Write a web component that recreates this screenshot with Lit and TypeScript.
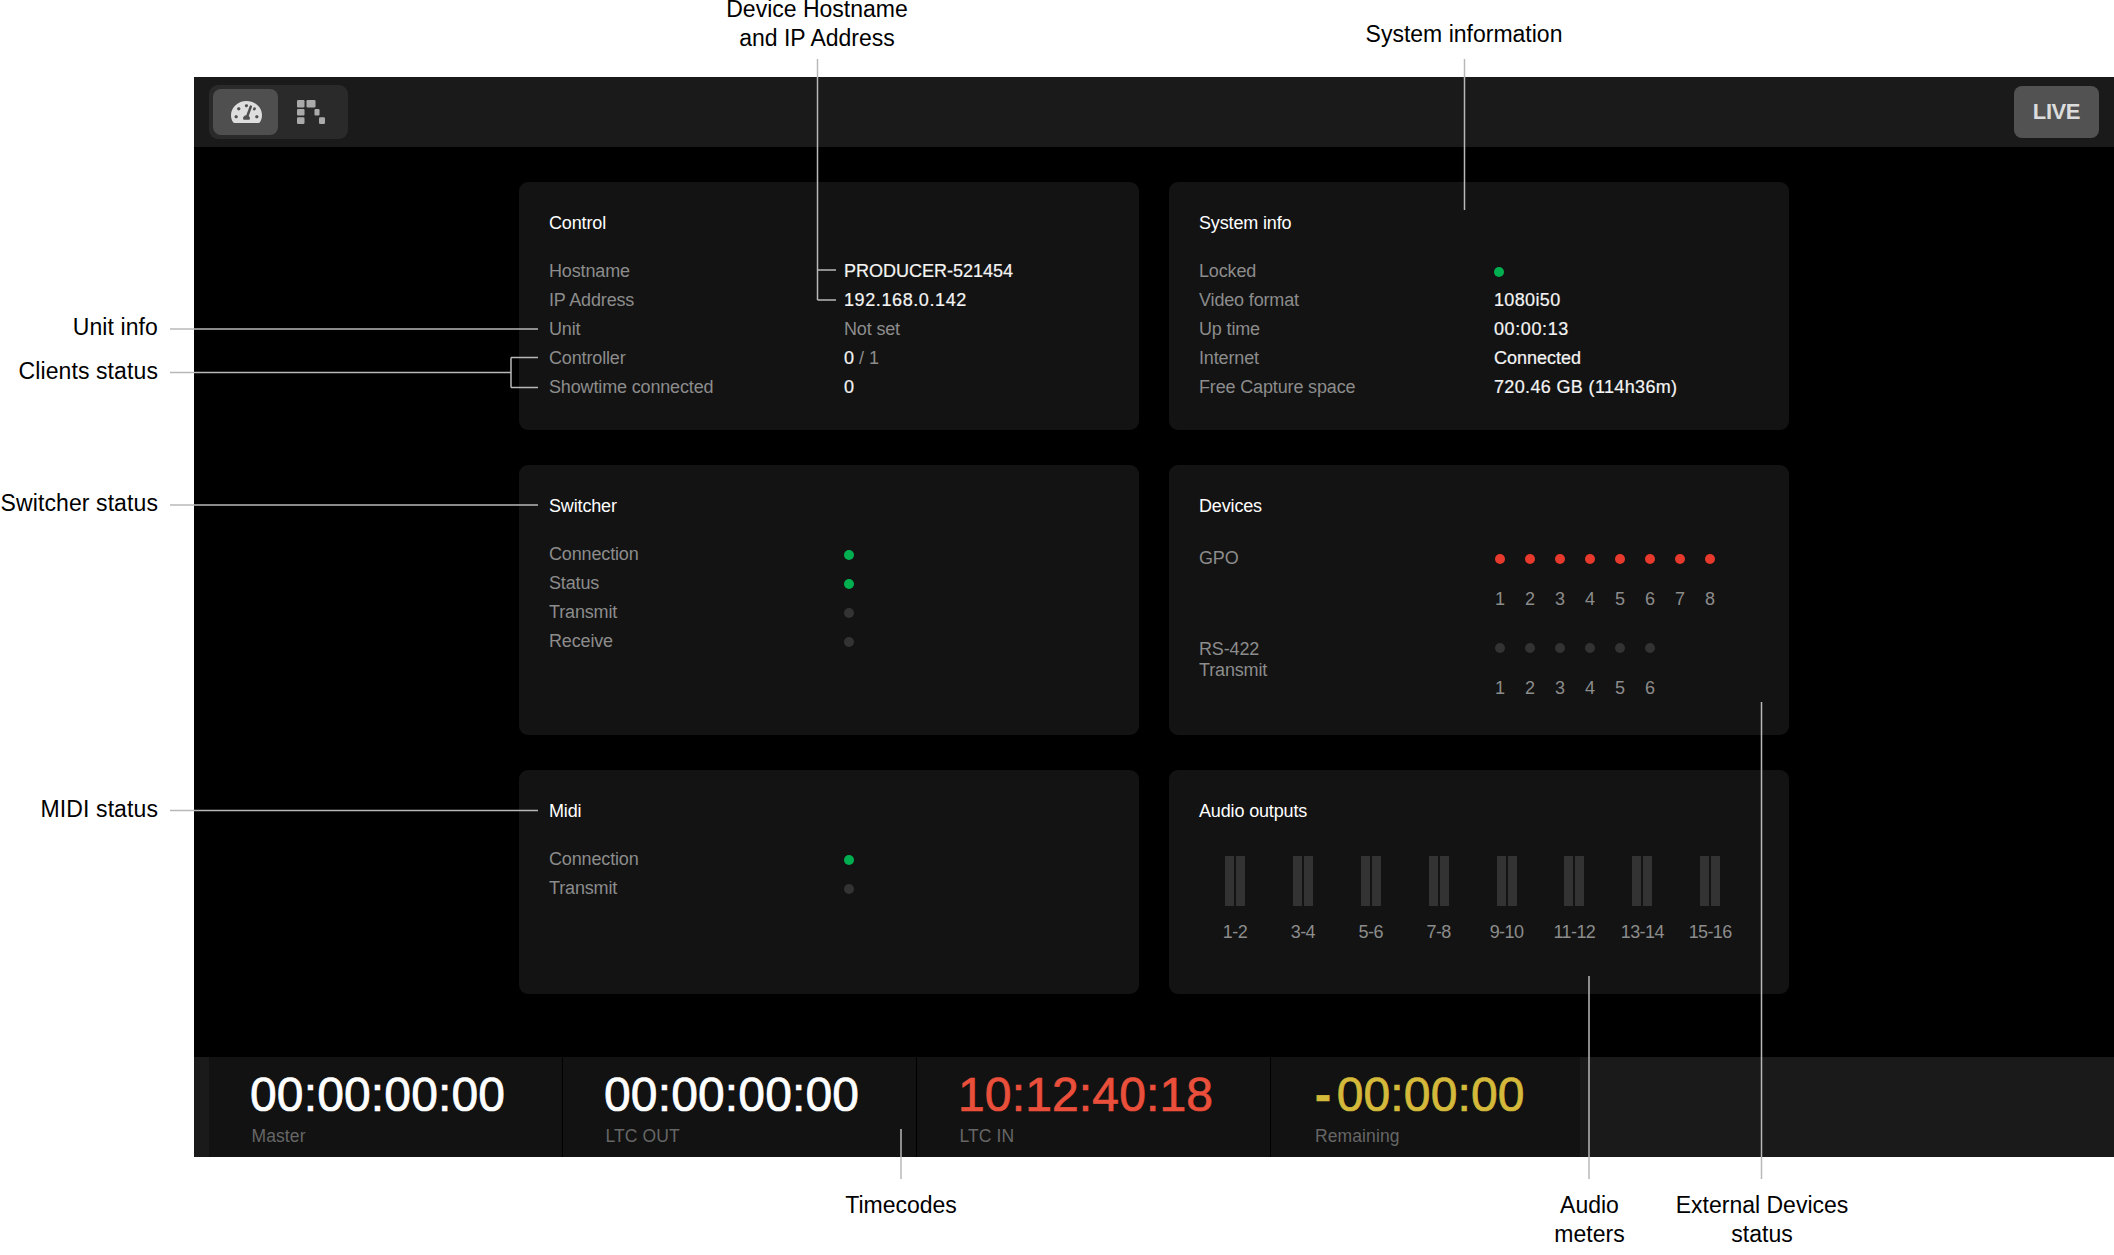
import { LitElement, css, html, svg } from "lit";
import { customElement } from "lit/decorators.js";

const GAUGE =
  "M288 32C128.94 32 0 160.94 0 320c0 52.8 14.25 102.26 39.06 144.8 5.61 9.62 16.3 15.2 27.44 15.2h443c11.14 0 21.83-5.58 27.44-15.2C561.75 422.26 576 372.8 576 320c0-159.06-128.94-288-288-288zm0 64c14.71 0 26.58 10.13 30.32 23.65-1.11 2.26-2.64 4.23-3.45 6.67l-9.22 27.67c-5.13 3.49-10.97 6.01-17.64 6.01-17.67 0-32-14.33-32-32S270.33 96 288 96zM96 384c-17.67 0-32-14.33-32-32s14.33-32 32-32 32 14.33 32 32-14.33 32-32 32zm48-160c-17.67 0-32-14.33-32-32s14.33-32 32-32 32 14.33 32 32-14.33 32-32 32zm246.77-72.41l-61.33 184C343.13 347.33 352 364.54 352 384c0 11.72-3.38 22.55-8.88 32H232.88c-5.5-9.45-8.88-20.28-8.88-32 0-33.94 26.5-61.43 59.9-63.59l61.34-184.01c4.17-12.56 17.73-19.45 30.36-15.17 12.57 4.19 19.35 17.77 15.17 30.36zm14.66 57.2l15.52-46.55c3.47-1.29 7.13-2.23 11.05-2.23 17.67 0 32 14.33 32 32s-14.33 32-32 32c-11.38-.01-20.89-6.28-26.57-15.22zM480 384c-17.67 0-32-14.33-32-32s14.33-32 32-32 32 14.33 32 32-14.33 32-32 32z";

// x, y, width, height of each block in the second tab icon
const BLOCKS = [
  [0, 0, 7.5, 7.5],
  [9.5, 0, 9, 7.5],
  [0, 9, 7.5, 6.5],
  [17.5, 9, 5, 6.5],
  [0, 17.2, 7.5, 6.8],
  [22, 17.2, 6, 6.8],
];

// callout leader lines: x1, y1, x2, y2
const LEADERS = [
  [817.5, 59, 817.5, 300],
  [817.5, 270, 836, 270],
  [817.5, 300, 836, 300],
  [1464.5, 59, 1464.5, 210],
  [170, 329, 538, 329],
  [170, 372.5, 511, 372.5],
  [511, 357.5, 511, 387.5],
  [511, 357.5, 538, 357.5],
  [511, 387.5, 538, 387.5],
  [170, 505, 538, 505],
  [170, 810.5, 538, 810.5],
  [901, 1129, 901, 1179],
  [1589, 976, 1589, 1179],
  [1761.5, 702, 1761.5, 1179],
];

// callout labels: anchor x, top y, alignment, lines
const NOTES: [number, number, string, string[]][] = [
  [817, -5, "center", ["Device Hostname", "and IP Address"]],
  [1464, 20, "center", ["System information"]],
  [158, 313, "end", ["Unit info"]],
  [158, 356.5, "end", ["Clients status"]],
  [158, 488.5, "end", ["Switcher status"]],
  [158, 794.5, "end", ["MIDI status"]],
  [901, 1190.5, "center", ["Timecodes"]],
  [1589.5, 1190.5, "center", ["Audio", "meters"]],
  [1762, 1190.5, "center", ["External Devices", "status"]],
];

const TIMECODES = [
  { label: "Master", value: "00:00:00:00", tone: "" },
  { label: "LTC OUT", value: "00:00:00:00", tone: "" },
  { label: "LTC IN", value: "10:12:40:18", tone: "tc-red" },
];

const METERS = ["1-2", "3-4", "5-6", "7-8", "9-10", "11-12", "13-14", "15-16"];

@customElement("app-root")
export class AppRoot extends LitElement {
  private dot(tone: string) {
    return html`<span class="dot ${tone}"></span>`;
  }

  private dotRow(count: number, tone: string) {
    const items = Array.from({ length: count }, (_, i) => i + 1);
    return html`
      <div class="ports">
        ${items.map((n) => html`<div class="port">${this.dot(tone)}<span class="num">${n}</span></div>`)}
      </div>
    `;
  }

  private renderHeader() {
    return html`
      <header class="topbar">
        <div class="tabs">
          <div class="tab active">
            <svg width="31" height="22" viewBox="0 32 576 448" preserveAspectRatio="none">
              <path d=${GAUGE} fill="#dedede"></path>
            </svg>
          </div>
          <div class="tab">
            <svg width="28" height="24" viewBox="0 0 28 24">
              ${BLOCKS.map(([x, y, w, h]) => svg`<rect x=${x} y=${y} width=${w} height=${h} rx="1.2" fill="#aaa"></rect>`)}
            </svg>
          </div>
        </div>
        <div class="live">LIVE</div>
      </header>
    `;
  }

  private renderCards() {
    return html`
      <main class="content">
        <div class="grid">
          <section class="card">
            <h2>Control</h2>
            <div class="rows">
              <span>Hostname</span><b>PRODUCER-521454</b>
              <span>IP Address</span><b class="ip">192.168.0.142</b>
              <span>Unit</span><span>Not set</span>
              <span>Controller</span><b>0 <span>/ 1</span></b>
              <span>Showtime connected</span><b>0</b>
            </div>
          </section>
          <section class="card">
            <h2>System info</h2>
            <div class="rows">
              <span>Locked</span><div>${this.dot("green")}</div>
              <span>Video format</span><b class="digits">1080i50</b>
              <span>Up time</span><b class="ip">00:00:13</b>
              <span>Internet</span><b>Connected</b>
              <span>Free Capture space</span><b class="digits">720.46 GB (114h36m)</b>
            </div>
          </section>
          <section class="card">
            <h2>Switcher</h2>
            <div class="rows">
              <span>Connection</span><div>${this.dot("green")}</div>
              <span>Status</span><div>${this.dot("green")}</div>
              <span>Transmit</span><div>${this.dot("off")}</div>
              <span>Receive</span><div>${this.dot("off")}</div>
            </div>
          </section>
          <section class="card">
            <h2>Devices</h2>
            <div class="devices">
              <div class="device-name">GPO</div>
              ${this.dotRow(8, "red")}
              <div class="device-name second">RS-422<br />Transmit</div>
              ${this.dotRow(6, "off")}
            </div>
          </section>
          <section class="card">
            <h2>Midi</h2>
            <div class="rows">
              <span>Connection</span><div>${this.dot("green")}</div>
              <span>Transmit</span><div>${this.dot("off")}</div>
            </div>
          </section>
          <section class="card">
            <h2>Audio outputs</h2>
            <div class="meters">
              ${METERS.map(
                (m) => html`
                  <div class="meter">
                    <div class="bars"><i></i><i></i></div>
                    <span>${m}</span>
                  </div>
                `,
              )}
            </div>
          </section>
        </div>
      </main>
    `;
  }

  private renderTimecodes() {
    return html`
      <footer class="timebar">
        ${TIMECODES.map(
          (t) => html`
            <div class="cell">
              <div class="time ${t.tone}">${t.value}</div>
              <div class="time-label">${t.label}</div>
            </div>
          `,
        )}
        <div class="cell last">
          <div class="time tc-yellow"><span class="minus">-</span>00:00:00</div>
          <div class="time-label wide">Remaining</div>
        </div>
      </footer>
    `;
  }

  private renderCallouts() {
    return html`
      <svg class="leaders" width="2114" height="1255">
        ${LEADERS.map(([x1, y1, x2, y2]) => svg`<line x1=${x1} y1=${y1} x2=${x2} y2=${y2}></line>`)}
      </svg>
      ${NOTES.map(([x, y, align, lines]) => {
        const shift = align === "center" ? "-50%" : "-100%";
        return html`
          <div class="note ${align}" style="left:${x}px;top:${y}px;transform:translateX(${shift});text-align:${align}">
            ${lines.map((l) => html`<div>${l}</div>`)}
          </div>
        `;
      })}
    `;
  }

  protected override render() {
    return html`
      <div class="app">${this.renderHeader()} ${this.renderCards()} ${this.renderTimecodes()}</div>
      ${this.renderCallouts()}
    `;
  }

  static override styles = css`
    :host {
      display: block;
      position: relative;
      height: 1255px;
      overflow: hidden;
      background: #fff;
      font-family: "Liberation Sans", Arial, sans-serif;
      font-size: 18px;
      letter-spacing: -0.15px;
      color: #8c8c8c;
    }
    .app {
      display: flex;
      flex-direction: column;
      height: 1080px;
      margin-left: 194px;
      padding-top: 77px;
      background: #000;
      background-clip: content-box;
    }
    .topbar {
      flex: none;
      display: flex;
      justify-content: space-between;
      align-items: center;
      box-sizing: border-box;
      height: 70px;
      padding: 0 15px;
      background: #1a1a1a;
    }
    .tabs {
      display: flex;
      box-sizing: border-box;
      width: 139px;
      height: 54px;
      padding: 4px;
      background: #2a2a2a;
      border-radius: 9px;
    }
    .tab {
      flex: 1;
      display: flex;
      align-items: center;
      justify-content: center;
      border-radius: 8px;
    }
    .tab.active {
      flex: none;
      width: 65px;
      padding-left: 1px;
      box-sizing: border-box;
      background: #4f4f4f;
    }
    .live {
      display: flex;
      align-items: center;
      justify-content: center;
      width: 85px;
      height: 52px;
      border-radius: 8px;
      background: #525252;
      color: #dcdcdc;
      font-size: 22px;
      font-weight: 700;
      letter-spacing: -0.4px;
    }
    .content {
      flex: 1;
      display: flex;
      justify-content: center;
      padding-top: 35px;
    }
    .grid {
      display: grid;
      grid-template-columns: 620px 620px;
      grid-template-rows: 248px 270px 224px;
      gap: 35px 30px;
    }
    .card {
      box-sizing: border-box;
      padding: 31px 30px 0;
      background: #131313;
      border-radius: 9px;
    }
    h2 {
      margin: 0 0 24px;
      color: #fff;
      font-size: 18px;
      font-weight: 400;
      line-height: 20px;
    }
    .rows {
      display: grid;
      grid-template-columns: 295px 1fr;
      grid-auto-rows: 29px;
      align-items: center;
    }
    .rows b {
      color: #f4f4f4;
      font-weight: 400;
      letter-spacing: 0;
      -webkit-text-stroke: 0.2px currentColor;
    }
    .rows b span {
      color: #8c8c8c;
      -webkit-text-stroke: 0;
    }
    .rows b.ip {
      letter-spacing: 0.6px;
    }
    .rows b.digits {
      letter-spacing: 0.35px;
    }
    .rows div {
      display: flex;
    }
    .dot {
      display: block;
      width: 10px;
      height: 10px;
      border-radius: 50%;
    }
    .green {
      background: #00b050;
    }
    .red {
      background: #e83a2c;
    }
    .off {
      background: #333;
    }
    .devices {
      display: grid;
      grid-template-columns: 295px 1fr;
      row-gap: 27px;
      padding-top: 8px;
      line-height: 21px;
    }
    .device-name.second {
      padding-top: 2px;
    }
    .ports {
      display: flex;
      gap: 20px;
      padding-top: 6px;
    }
    .port {
      display: flex;
      flex-direction: column;
      align-items: center;
      gap: 25px;
      width: 10px;
      margin-left: 1px;
      margin-right: -1px;
    }
    .meters {
      display: grid;
      grid-template-columns: repeat(8, 67.9px);
      padding: 10.5px 0 0 2px;
    }
    .meter {
      display: flex;
      flex-direction: column;
      align-items: center;
      gap: 16px;
      line-height: 21px;
      white-space: nowrap;
      letter-spacing: -0.6px;
    }
    .bars {
      display: flex;
      gap: 2px;
    }
    .bars i {
      display: block;
      width: 9px;
      height: 50px;
      background: #333;
    }
    .timebar {
      flex: none;
      display: flex;
      height: 100px;
      padding-left: 15px;
      background: #1a1a1a;
    }
    .cell {
      box-sizing: border-box;
      width: 354px;
      padding: 14px 0 0 41px;
      background: #121212;
      border-right: 1px solid #000;
    }
    .cell.last {
      width: 309px;
      border-right: 0;
    }
    .time {
      color: #fff;
      font-size: 48px;
      line-height: 48px;
      letter-spacing: 0.15px;
      -webkit-text-stroke: 0.7px currentColor;
    }
    .tc-red {
      color: #e94f3a;
    }
    .tc-yellow {
      color: #d4b93a;
    }
    .minus {
      margin: 0 5.5px 0 3px;
      font-weight: 700;
    }
    .time-label {
      margin-top: 7px;
      padding-left: 1.5px;
      color: #666;
      font-size: 17.5px;
      line-height: 20px;
      letter-spacing: 0.1px;
    }
    .time-label.wide {
      padding-left: 3px;
    }
    .leaders {
      position: absolute;
      inset: 0;
      pointer-events: none;
    }
    .leaders line {
      stroke: #b8b8b8;
      stroke-width: 1.5;
    }
    .note {
      position: absolute;
      color: #000;
      font-size: 23px;
      line-height: 29px;
      letter-spacing: 0;
      white-space: nowrap;
    }
    .note.end {
      letter-spacing: 0.1px;
    }
  `;
}
